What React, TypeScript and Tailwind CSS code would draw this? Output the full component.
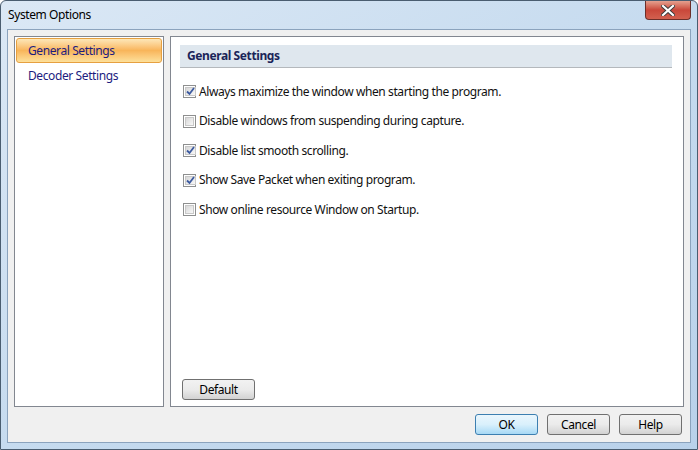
import React from "react";

const options = [
  { label: "Always maximize the window when starting the program.", checked: true },
  { label: "Disable windows from suspending during capture.", checked: false },
  { label: "Disable list smooth scrolling.", checked: true },
  { label: "Show Save Packet when exiting program.", checked: true },
  { label: "Show online resource Window on Startup.", checked: false },
];

const Check = ({ checked }: { checked: boolean }) => (
  <span className="w-[13px] h-[13px] shrink-0 border border-[#8e8f8f] bg-white p-px flex">
    <span className="flex-1 border border-[#c8c8c8] bg-gradient-to-br from-[#d8d8d8] to-[#f8f8f8] flex items-center justify-center">
      {checked && (
        <svg width="9" height="9" viewBox="0 0 9 9">
          <path d="M1 4.5 L3.5 7 L8 1" fill="none" stroke="#3c5aa0" strokeWidth="1.8" />
        </svg>
      )}
    </span>
  </span>
);

const Btn = ({ children, focus, w }: { children: React.ReactNode; focus?: boolean; w: string }) => (
  <button
    className={`${w} h-[21px] rounded-[3px] border text-[12px] leading-none text-black ${
      focus
        ? "border-[#3c7fb1] bg-gradient-to-b from-[#eaf6fd] via-[#d9f0fc] to-[#a7d9f5]"
        : "border-[#707070] bg-gradient-to-b from-[#f2f2f2] via-[#ebebeb] to-[#d2d2d2]"
    }`}
  >
    {children}
  </button>
);

export default function App() {
  return (
    <div
      className="w-[698px] h-[450px] rounded-t-[6px] border border-[#4a5d70] bg-gradient-to-br from-[#dbe8f5] via-[#c6dbef] to-[#b9d1ea] flex flex-col tracking-[-0.4px]"
      style={{ fontFamily: '"Noto Sans", "Open Sans", sans-serif' }}
    >
      {/* Title bar */}
      <div className="h-[28px] flex items-start justify-between pl-[7px] pr-[6px]">
        <span className="mt-[6px] text-[12px] leading-[16px] text-black">System Options</span>
        <div className="w-[46px] h-[19px] rounded-b-[4px] border border-t-0 border-[#6b2f2a] bg-gradient-to-b from-[#e4a08f] via-[#c9473a] to-[#d2604f] flex items-center justify-center">
          <svg width="14" height="11" viewBox="0 0 14 11">
            <path d="M2 1 L12 10 M12 1 L2 10" stroke="#3a3a3a" strokeWidth="4" strokeLinecap="square" />
            <path d="M2 1 L12 10 M12 1 L2 10" stroke="#ffffff" strokeWidth="2.2" strokeLinecap="square" />
          </svg>
        </div>
      </div>

      {/* Client area */}
      <div className="flex-1 mx-[6px] mb-[6px] border border-[#8ba3bd] bg-[#f0f0f0] flex flex-col px-[6px] pt-[6px] pb-[7px]">
        <div className="flex gap-[6px] h-[371px]">
          {/* Left list */}
          <div className="w-[150px] border border-[#828790] bg-white p-px">
            <div className="h-[25px] rounded-[3px] border border-[#e6a040] bg-gradient-to-b from-[#fde7b8] via-[#f8b55a] to-[#fde09a] flex items-center pl-[11px] text-[12px] text-[#1c1c80]">
              General Settings
            </div>
            <div className="h-[25px] flex items-center pl-[12px] text-[12px] text-[#1c1c80]">
              Decoder Settings
            </div>
          </div>

          {/* Right panel */}
          <div className="flex-1 border border-[#828790] bg-white pl-[9px] pr-[11px] pt-[8px] pb-[6px] flex flex-col">
            <div className="h-[23px] bg-[#dfe7ee] border-b border-[#b4b8bc] flex items-center pl-[7px] text-[12px] font-bold text-[#1a2458]">
              General Settings
            </div>
            <div className="flex flex-col gap-[16.5px] mt-[17px] pl-[3px]">
              {options.map((o) => (
                <div key={o.label} className="flex items-center gap-[3px] h-[13px]">
                  <Check checked={o.checked} />
                  <span className="text-[12px] leading-none text-[#111]">{o.label}</span>
                </div>
              ))}
            </div>
            <div className="mt-auto pl-[2px]">
              <Btn w="w-[73px]">Default</Btn>
            </div>
          </div>
        </div>

        <div className="mt-auto flex justify-end gap-[9px] pr-[2px]">
          <Btn w="w-[63px]" focus>OK</Btn>
          <Btn w="w-[63px]">Cancel</Btn>
          <Btn w="w-[63px]">Help</Btn>
        </div>
      </div>
    </div>
  );
}
